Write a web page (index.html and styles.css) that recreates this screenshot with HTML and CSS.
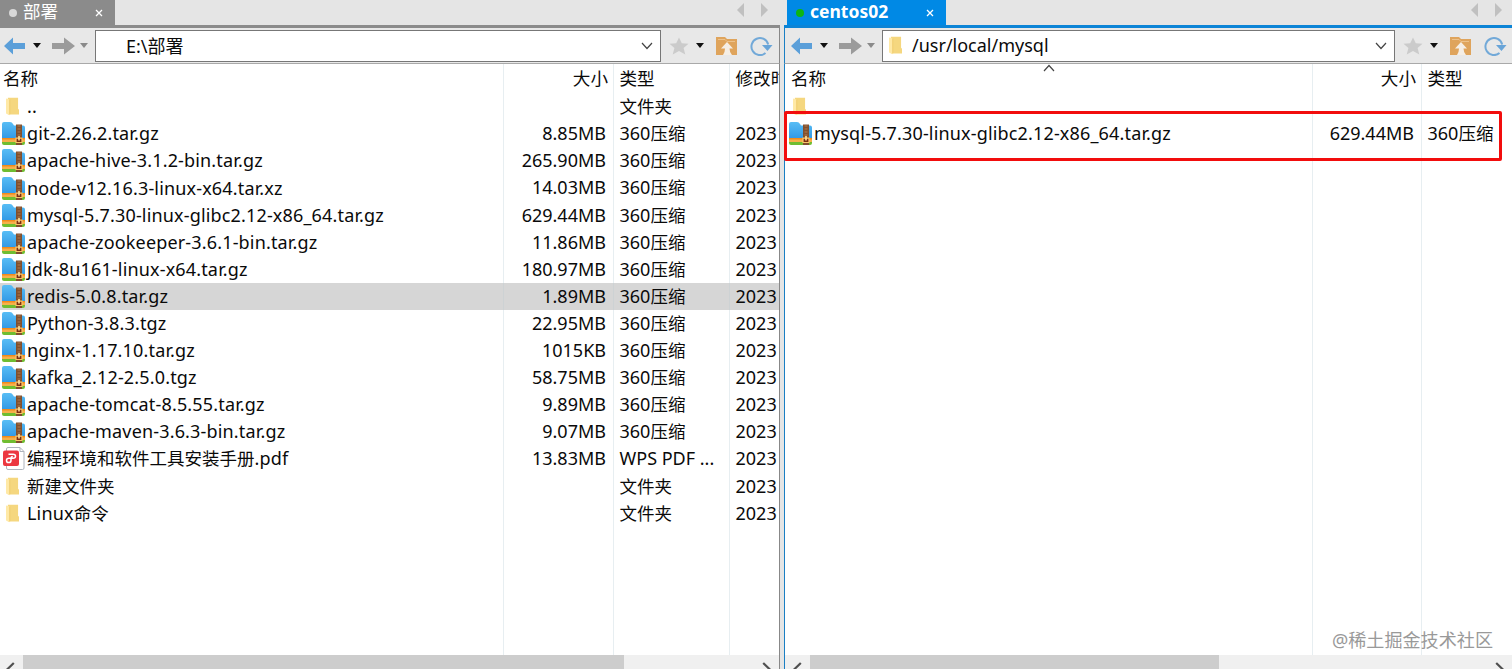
FILE: index.html
```html
<!DOCTYPE html>
<html lang="zh-CN">
  <head>
    <meta charset="UTF-8" />
    <title>部署</title>
    <link rel="stylesheet" href="styles.css">
  </head>
  <body onload="init()">
    <svg class="symbols" width="0" height="0">
      <linearGradient id="blue" x1="0" y1="0" x2="0" y2="1">
        <stop offset="0" stop-color="#58bdf5" />
        <stop offset="1" stop-color="#2f96e4" />
      </linearGradient>
      <symbol id="back" viewBox="0 0 21 18">
        <path d="M0 9L9 0.5V6H21V12H9V17.5Z" />
      </symbol>
      <symbol id="forward" viewBox="0 0 23 18">
        <path d="M0 6H12V0.5L23 9L12 17.5V12H0Z" />
      </symbol>
      <symbol id="star" viewBox="0 0 20 18">
        <path d="M10 0.5L12.8 6.2L19.5 6.8L14.6 11L16.3 17.5L10 14L3.7 17.5L5.4 11L0.5 6.8L7.2 6.2Z" fill="#cbcbcb" />
      </symbol>
      <symbol id="up" viewBox="0 0 21 18">
        <path d="M0 0H9L11 2H21V18H0Z" fill="#dfa45c" />
        <path d="M2 2.5H9L11 4.5H19" fill="none" stroke="#edc28b" />
        <path d="M11 5L17 11.5H13.5Q13.5 15 16 18H7Q9 15 9 11.5H5Z" fill="#f5eee5" />
      </symbol>
      <symbol id="refresh" viewBox="0 0 23 20">
        <path d="M15.5 17A8.5 8.5 0 1 1 18.2 8.5" fill="none" stroke="#72a9d8" stroke-width="2" />
        <path d="M12 9H22.5L17.5 15Z" fill="#68a4d8" />
      </symbol>
      <symbol id="folder" viewBox="0 0 14 19">
        <path d="M2 0H13V12L14 13V18H2Z" fill="#f5d77f" />
        <path d="M0 1L4 2V19L0 17Z" fill="#ffe9a6" />
        <path d="M4 2V18" stroke="#eac25d" stroke-width="0.7" />
      </symbol>
      <symbol id="archive" viewBox="0 0 23 23">
        <path d="M0 2Q0 0 2 0H8Q10 0 11 2L12 3.5H21Q23 3.5 23 5.5V18H0Z" fill="url(#blue)" />
        <path d="M0 16H23V18.5H0Z" fill="#f28a1c" />
        <path d="M0 17.5H23V20H0Z" fill="#f6b04a" />
        <path d="M0 20H23V21Q23 23 21 23H2Q0 23 0 21Z" fill="#6fbd31" />
        <path d="M14 2.5H20V23H14Z" fill="#81502e" />
        <path d="M15.5 4H18.5M15.5 7H18.5M15.5 10H18.5M15.5 13H18.5" stroke="#b07a4c" stroke-width="1" />
        <path d="M14 16.2H20V20.5H14Z" fill="#7c2d10" stroke="#f9c66a" stroke-width="1.2" />
        <path d="M17 14V18.5" stroke="#ffe09a" stroke-width="1.6" />
      </symbol>
      <symbol id="pdf" viewBox="0 0 22 23">
        <path d="M5 0.5H17L21 4.5V21Q21 22.5 19.5 22.5H5Q3.5 22.5 3.5 21V2Q3.5 0.5 5 0.5Z" fill="#fff" stroke="#aeb4bd" />
        <path d="M17 0.5V4.5H21" fill="none" stroke="#aeb4bd" />
        <rect y="3.5" width="16" height="15.5" rx="2" fill="#ec3740" />
        <path d="M5.5 7.2H10Q12.5 7.2 12.5 9.3Q12.5 11.3 10 11.3H6Q3.5 11.3 3.5 13.4Q3.5 15.5 5.7 15.5Q8 15.5 8 13.4V11.3Q8 9.5 9.8 9.5" fill="none" stroke="#fff" stroke-width="1.5" />
      </symbol>
      <symbol id="chevron" viewBox="0 0 12 8">
        <path d="M1 1L6 6.5L11 1" fill="none" stroke="#444" stroke-width="1.2" />
      </symbol>
      <symbol id="caret" viewBox="0 0 8 5">
        <path d="M0 0H8L4 5Z" />
      </symbol>
      <symbol id="close" viewBox="0 0 8 8">
        <path d="M1 1L7 7M7 1L1 7" stroke="#fff" stroke-width="1.3" />
      </symbol>
      <symbol id="scroll" viewBox="0 0 9 14">
        <path d="M1.2 1L7.4 7L1.2 13" fill="none" stroke="#505050" stroke-width="2.2" />
      </symbol>
      <symbol id="page" viewBox="0 0 7 14">
        <path d="M0 7L7 0V14Z" fill="#c0c0c0" />
      </symbol>
    </svg>

    <div class="panes">
      <div class="pane local">
        <div class="tabs">
          <div class="tab">
            <i class="dot"></i><span class="tab-title">部署</span>
            <svg class="close"><use href="#close" /></svg>
          </div>
          <div class="pager">
            <svg><use href="#page" /></svg>
            <svg class="flip"><use href="#page" /></svg>
          </div>
        </div>
        <div class="toolbar">
          <svg class="back"><use href="#back" /></svg>
          <svg class="caret"><use href="#caret" /></svg>
          <svg class="forward"><use href="#forward" /></svg>
          <svg class="caret disabled"><use href="#caret" /></svg>
          <div class="address">
            <span class="path">E:\部署</span>
            <svg class="chevron"><use href="#chevron" /></svg>
          </div>
          <svg class="star"><use href="#star" /></svg>
          <svg class="caret"><use href="#caret" /></svg>
          <svg class="up"><use href="#up" /></svg>
          <svg class="refresh"><use href="#refresh" /></svg>
        </div>
        <div class="list">
          <div class="row head">
            <div class="name">名称</div>
            <div class="size">大小</div>
            <div class="type">类型</div>
            <div class="date">修改时间</div>
          </div>
          <div class="rows"></div>
          <div class="row filler">
            <div class="name"></div>
            <div class="size"></div>
            <div class="type"></div>
            <div class="date"></div>
          </div>
        </div>
        <div class="scrollbar">
          <svg class="flip"><use href="#scroll" /></svg>
          <div class="track"><div class="thumb"></div></div>
          <svg><use href="#scroll" /></svg>
        </div>
      </div>

      <div class="pane remote">
        <div class="tabs">
          <div class="tab">
            <i class="dot"></i><span class="tab-title">centos02</span>
            <svg class="close"><use href="#close" /></svg>
          </div>
          <div class="pager">
            <svg><use href="#page" /></svg>
            <svg class="flip"><use href="#page" /></svg>
          </div>
        </div>
        <div class="toolbar">
          <svg class="back"><use href="#back" /></svg>
          <svg class="caret"><use href="#caret" /></svg>
          <svg class="forward"><use href="#forward" /></svg>
          <svg class="caret disabled"><use href="#caret" /></svg>
          <div class="address">
            <svg class="folder"><use href="#folder" /></svg>
            <span class="path">/usr/local/mysql</span>
            <svg class="chevron"><use href="#chevron" /></svg>
          </div>
          <svg class="star"><use href="#star" /></svg>
          <svg class="caret"><use href="#caret" /></svg>
          <svg class="up"><use href="#up" /></svg>
          <svg class="refresh"><use href="#refresh" /></svg>
        </div>
        <div class="list">
          <svg class="sort"><use href="#chevron" /></svg>
          <div class="row head">
            <div class="name">名称</div>
            <div class="size">大小</div>
            <div class="type">类型</div>
          </div>
          <div class="rows"></div>
          <div class="row filler">
            <div class="name"></div>
            <div class="size"></div>
            <div class="type"></div>
          </div>
          <div class="highlight"></div>
          <div class="watermark">@稀土掘金技术社区</div>
        </div>
        <div class="scrollbar">
          <svg class="flip"><use href="#scroll" /></svg>
          <div class="track"><div class="thumb"></div></div>
          <svg><use href="#scroll" /></svg>
        </div>
      </div>
    </div>

    <script>
      // icon, name, size, type, date
      let localFiles = [
        ["folder", "..", "", "文件夹", ""],
        ["archive", "git-2.26.2.tar.gz", "8.85MB", "360压缩", "2023"],
        ["archive", "apache-hive-3.1.2-bin.tar.gz", "265.90MB", "360压缩", "2023"],
        ["archive", "node-v12.16.3-linux-x64.tar.xz", "14.03MB", "360压缩", "2023"],
        ["archive", "mysql-5.7.30-linux-glibc2.12-x86_64.tar.gz", "629.44MB", "360压缩", "2023"],
        ["archive", "apache-zookeeper-3.6.1-bin.tar.gz", "11.86MB", "360压缩", "2023"],
        ["archive", "jdk-8u161-linux-x64.tar.gz", "180.97MB", "360压缩", "2023"],
        ["archive", "redis-5.0.8.tar.gz", "1.89MB", "360压缩", "2023"],
        ["archive", "Python-3.8.3.tgz", "22.95MB", "360压缩", "2023"],
        ["archive", "nginx-1.17.10.tar.gz", "1015KB", "360压缩", "2023"],
        ["archive", "kafka_2.12-2.5.0.tgz", "58.75MB", "360压缩", "2023"],
        ["archive", "apache-tomcat-8.5.55.tar.gz", "9.89MB", "360压缩", "2023"],
        ["archive", "apache-maven-3.6.3-bin.tar.gz", "9.07MB", "360压缩", "2023"],
        ["pdf", "编程环境和软件工具安装手册.pdf", "13.83MB", "WPS PDF ...", "2023"],
        ["folder", "新建文件夹", "", "文件夹", "2023"],
        ["folder", "Linux命令", "", "文件夹", "2023"],
      ];
      let remoteFiles = [
        ["folder", "", "", ""],
        ["archive", "mysql-5.7.30-linux-glibc2.12-x86_64.tar.gz", "629.44MB", "360压缩"],
      ];

      function init() {
        render(".local .rows", localFiles, "redis-5.0.8.tar.gz");
        render(".remote .rows", remoteFiles);
      }

      // chinese runs are set slightly smaller than the latin text
      function cjk(text) {
        return text.replace(/[\u4e00-\u9fff]+/g, '<span class="cjk">$&</span>');
      }

      function render(selector, files, selected) {
        document.querySelector(selector).innerHTML = files
          .map((f) => {
            let cells = ["size", "type", "date"]
              .slice(0, f.length - 2)
              .map((c, i) => `<div class="${c}">${cjk(f[i + 2])}</div>`)
              .join("");
            return `
              <div class="row ${f[1] && f[1] === selected ? "selected" : ""}">
                <div class="name">
                  <span class="icon"><svg class="${f[0]}"><use href="#${f[0]}" /></svg></span><span>${cjk(f[1])}</span>
                </div>${cells}
              </div>`;
          })
          .join("");
      }
    </script>
  </body>
</html>
```
FILE: styles.css
```css
* {
  box-sizing: border-box;
}

body {
  margin: 0;
  height: 669px;
  overflow: hidden;
  font-family: "Noto Sans", "Noto Sans CJK SC", sans-serif;
  font-size: 18px;
  color: #0a0a0a;
  background-color: #e5e5e5;
}

svg {
  flex: none;
  display: block;
}

.symbols {
  position: absolute;
}

.panes {
  display: flex;
  gap: 4px;
  height: 669px;
}

.pane {
  display: flex;
  flex-direction: column;
  min-width: 0;
}

.local {
  width: 780px;
}

.remote {
  width: 728px;
}

.tabs {
  height: 28px;
  flex: none;
  display: flex;
  justify-content: space-between;
  border-bottom: 3px solid #8b8b8b;
}

.tab {
  width: 115px;
  height: 25px;
  display: flex;
  align-items: center;
  padding: 0 12px 0 9px;
  background-color: #8b8b8b;
  color: #fff;
}

.tab-title {
  font-size: 17.5px;
  line-height: 24px;
  margin-top: -3px;
}

.remote .tabs {
  border-color: #0c84d6;
}

.remote .tab {
  width: 159px;
  margin-left: 3px;
  background-color: #0089e5;
}

.remote .tab-title {
  font-weight: bold;
}

.dot {
  width: 8px;
  height: 8px;
  margin-right: 6px;
  border-radius: 50%;
  background-color: #d8d8d8;
}

.remote .dot {
  background-color: #0db514;
}

.close {
  width: 8px;
  height: 8px;
  margin-left: auto;
}

.pager {
  display: flex;
  gap: 17px;
  padding: 3px 12px 0 0;
}

.remote .pager {
  padding-right: 10px;
}

.pager svg {
  width: 7px;
  height: 14px;
}

.flip {
  transform: scaleX(-1);
}

.toolbar {
  height: 36px;
  flex: none;
  display: flex;
  align-items: center;
  padding-left: 4px;
  background-color: #e8e8e8;
  border-bottom: 1px solid #a9a9a9;
  border-right: 1px solid #888;
}

.remote .toolbar {
  padding-left: 6px;
  border-right: none;
  border-left: 1px solid #1a7fc4;
}

.back {
  width: 21px;
  height: 18px;
  fill: #5b9fd9;
}

.forward {
  width: 23px;
  height: 18px;
  margin-left: 11px;
  fill: #9b9b9b;
}

.caret {
  width: 8px;
  height: 5px;
  margin-left: 8px;
  fill: #111;
}

.caret.disabled {
  margin: 0 7px 0 5px;
  fill: #8a8a8a;
}

.address {
  width: 566px;
  height: 32px;
  display: flex;
  align-items: center;
  margin-right: 8px;
  padding: 0 7px 0 30px;
  border: 1px solid #777;
  background-color: #fff;
}

.path {
  margin-top: -2px;
}

.remote .address {
  width: 513px;
  padding-left: 6px;
}

.address .folder {
  margin-right: 10px;
}

.chevron {
  width: 12px;
  height: 8px;
  margin-left: auto;
}

.star {
  width: 20px;
  height: 18px;
}

.toolbar .star + .caret {
  margin-left: 7px;
}

.up {
  width: 21px;
  height: 18px;
  margin-left: 12px;
}

.refresh {
  width: 23px;
  height: 20px;
  margin-left: 13px;
}

.list {
  flex: 1;
  min-height: 0;
  display: flex;
  flex-direction: column;
  position: relative;
  background-color: #fff;
  border-right: 1px solid #888;
}

.remote .list {
  border-right: none;
  border-left: 1px solid #1a7fc4;
}

.row {
  height: 27.1px;
  display: grid;
  grid-template-columns: 504px 110px 116px 49px;
  line-height: 27px;
  white-space: nowrap;
}

.remote .row {
  grid-template-columns: 528px 109px 90px;
}

.row > div {
  overflow: hidden;
  border-right: 1px solid #e7eef1;
}

.row > div:last-child {
  border-right: none;
}

.head {
  height: 29.2px;
  flex: none;
  font-size: 17.6px;
  line-height: 28px;
}

.filler {
  flex: 1;
}

.selected {
  background-color: #d6d6d6;
}

.selected > div {
  border-color: #cdd2d4;
}

.name {
  display: flex;
  align-items: center;
  letter-spacing: 0.16px;
}

.cjk {
  font-size: 17.5px;
  letter-spacing: 0;
}

.head .name {
  align-items: flex-start;
  padding-left: 3px;
  letter-spacing: 0;
}

.remote .head .name {
  padding-left: 6px;
}

.icon {
  width: 27px;
  flex: none;
  padding-left: 2px;
}

.remote .icon {
  width: 29px;
  padding-left: 4px;
}

.icon .folder {
  margin-left: 4px;
}

.icon .pdf {
  margin-left: 1px;
}

.folder {
  width: 13px;
  height: 19px;
}

.archive {
  width: 23px;
  height: 23px;
}

.pdf {
  width: 22px;
  height: 23px;
}

.size {
  padding-right: 7px;
  text-align: right;
}

.head .size {
  padding-right: 5px;
}

.type,
.date {
  padding-left: 5.5px;
}

.sort {
  position: absolute;
  left: 258px;
  top: 0;
  width: 12px;
  height: 8px;
  transform: scaleY(-1);
}

.highlight {
  position: absolute;
  left: -1px;
  top: 47px;
  width: 718px;
  height: 50px;
  border: 3px solid #f20d0d;
  border-radius: 2px;
}

.watermark {
  position: absolute;
  right: 19px;
  bottom: 3px;
  font-size: 18.1px;
  color: #999;
}

.scrollbar {
  height: 14px;
  flex: none;
  display: flex;
  padding: 7px 8px 0 6px;
  overflow: hidden;
  background-color: #f0f0f0;
  border-right: 1px solid #888;
}

.remote .scrollbar {
  padding-left: 8px;
  border-right: none;
  border-left: 1px solid #1a7fc4;
}

.scrollbar svg {
  width: 9px;
  height: 14px;
}

.track {
  flex: 1;
  height: 14px;
  margin: -7px 8px 0;
}

.thumb {
  width: 601px;
  height: 14px;
  background-color: #cdcdcd;
}

.remote .thumb {
  width: 409px;
}
```
